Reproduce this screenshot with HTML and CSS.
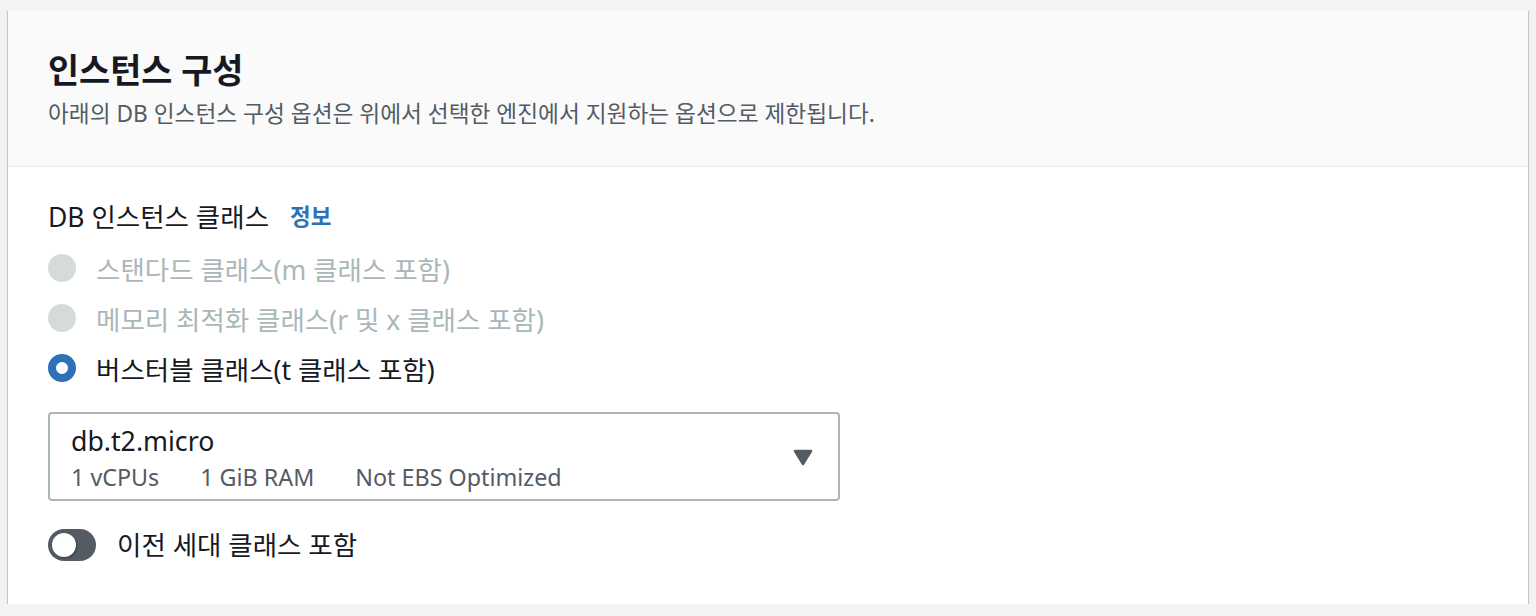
FILE: index.html
```html
<!DOCTYPE html>
<html lang="ko">
<head>
<meta charset="utf-8">
<title>인스턴스 구성</title>
<link rel="stylesheet" href="styles.css">
</head>
<body>
<section class="card">
  <header class="card-header">
    <h2 class="title">인스턴스 구성</h2>
    <p class="desc">아래의 DB 인스턴스 구성 옵션은 위에서 선택한 엔진에서 지원하는 옵션으로 제한됩니다.</p>
  </header>
  <div class="card-body">
    <div class="field-label">DB 인스턴스 클래스 <a class="info">정보</a></div>
    <div class="radios">
      <div class="radio disabled"><span class="dot"></span><span class="rtext">스탠다드 클래스(m 클래스 포함)</span></div>
      <div class="radio disabled"><span class="dot"></span><span class="rtext">메모리 최적화 클래스(r 및 x 클래스 포함)</span></div>
      <div class="radio checked"><span class="dot"></span><span class="rtext">버스터블 클래스(t 클래스 포함)</span></div>
    </div>
    <div class="select">
      <div class="select-text">
        <div class="select-main">db.t2.micro</div>
        <div class="select-tags"><span>1 vCPUs</span><span>1 GiB RAM</span><span>Not EBS Optimized</span></div>
      </div>
      <svg class="caret" width="20" height="17" viewBox="0 0 20 17"><polygon points="2,2 18,2 10,15" fill="#545b64" stroke="#545b64" stroke-width="2.5" stroke-linejoin="round"/></svg>
    </div>
    <div class="toggle-row">
      <span class="toggle"><span class="knob"></span></span>
      <span class="ttext">이전 세대 클래스 포함</span>
    </div>
  </div>
</section>
</body>
</html>
```

FILE: styles.css
```css
* { box-sizing: border-box; }
html, body { margin: 0; }
body {
  background: #f2f3f3;
  padding: 10px 8px 0 8px;
  font-family: "Noto Sans", "Noto Sans CJK KR", sans-serif;
  color: #16191f;
}
.card {
  width: 1520px;
  height: 594px;
  background: #ffffff;
  box-shadow: 0 1px 1px 0 rgba(0,28,36,0.3), 1px 1px 1px 0 rgba(0,28,36,0.15), -1px 1px 1px 0 rgba(0,28,36,0.15);
}
.card-header {
  background: #fafafa;
  border-bottom: 1px solid #eaeded;
  height: 157px;
  padding: 42px 40px 0 40px;
}
.title {
  margin: 0;
  font-size: 33.8px;
  line-height: 36px;
  font-weight: 700;
  color: #16191f;
}
.desc {
  margin: 11px 0 0 0;
  font-size: 22.7px;
  line-height: 30px;
  color: #545b64;
}
.card-body {
  padding: 35px 40px 0 40px;
}
.field-label {
  font-size: 26.5px;
  line-height: 30px;
  display: flex;
  align-items: center;
  gap: 21px;
}
.info {
  color: #2f71b8;
  font-weight: 700;
  font-size: 22.5px;
}
.radios {
  margin-top: 11px;
}
.radio {
  height: 50px;
  display: flex;
  align-items: center;
  gap: 20px;
  font-size: 26.5px;
}
.dot {
  width: 28px;
  height: 28px;
  border-radius: 50%;
  flex: none;
}
.radio.disabled .dot { background: #d5dbdb; }
.radio.disabled .rtext { color: #aab7b8; }
.radio.checked .dot {
  background: #ffffff;
  border: 8px solid #2f71b8;
}
.select {
  margin-top: 19px;
  width: 792px;
  height: 89px;
  border: 2px solid #aab7b8;
  border-radius: 4px;
  padding: 12px 25px 0 21px;
  display: flex;
  justify-content: space-between;
  align-items: flex-start;
}
.select-main {
  font-size: 26.7px;
  line-height: 30px;
}
.select-tags {
  margin-top: 6px;
  font-size: 23.3px;
  line-height: 30px;
  color: #545b64;
  display: flex;
  gap: 41px;
}
.caret { margin-top: 23px; }
.toggle-row {
  margin-top: 27px;
  display: flex;
  align-items: center;
  gap: 21px;
}
.toggle {
  width: 48px;
  height: 32px;
  border-radius: 16px;
  background: #545b64;
  position: relative;
  flex: none;
}
.knob {
  position: absolute;
  left: 4px;
  top: 4px;
  width: 24px;
  height: 24px;
  border-radius: 50%;
  background: #ffffff;
  box-shadow: 1px 1px 2px rgba(0,0,0,0.35);
}
.ttext {
  font-size: 26.5px;
  line-height: 34px;
}
```
